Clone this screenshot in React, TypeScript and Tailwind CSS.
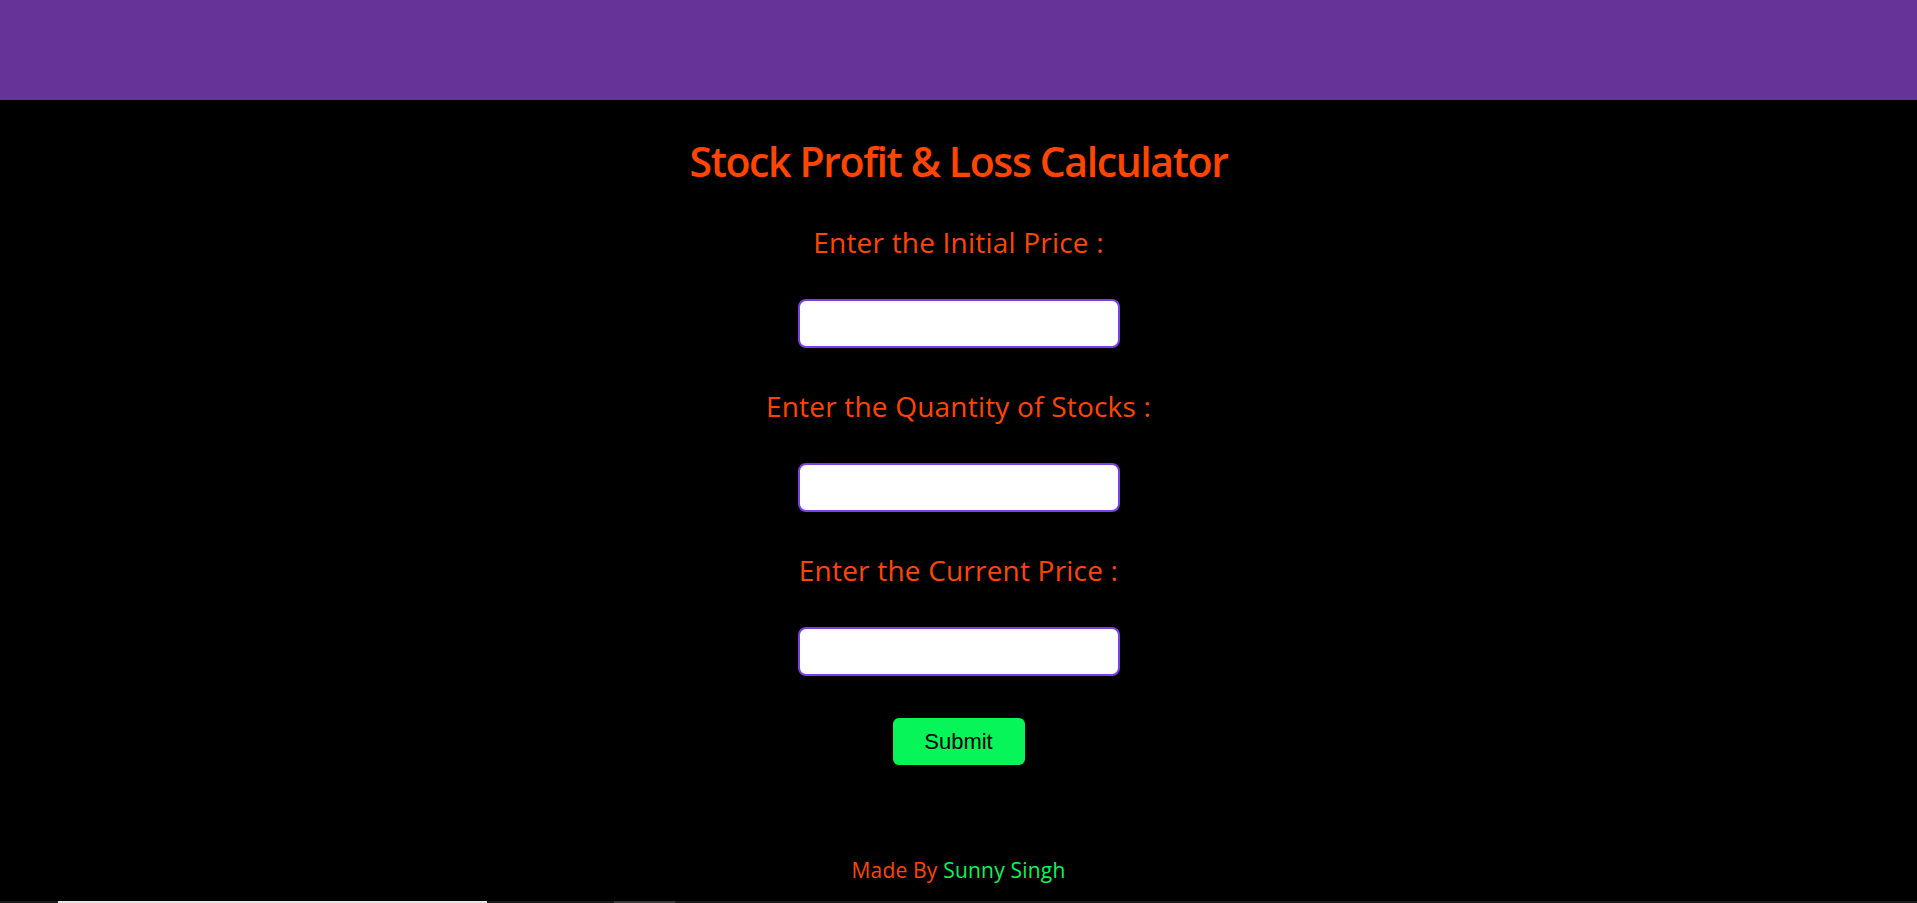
import React from "react";

const font = { fontFamily: '"Open Sans", "Noto Sans", sans-serif' } as const;

function Field({ label }: { label: string }) {
  return (
    <>
      <label className="block text-[28px] leading-[32px] tracking-[0.2px] text-[#ff4500] mt-[42px]">{label}</label>
      <input
        type="number"
        className="mt-[41px] w-[322px] h-[49px] bg-white border-2 border-[#7b3fe4] rounded-lg outline-none px-2"
      />
    </>
  );
}

export default function App() {
  return (
    <div className="min-h-[903px] bg-black flex flex-col" style={font}>
      <header className="h-[100px] w-full bg-[#663399]" />
      <main className="flex-1 flex flex-col items-center">
        <h1 className="mt-[39px] text-[41px] leading-[45px] font-semibold tracking-[-1.4px] text-[#ff4500]">
          Stock Profit &amp; Loss Calculator
        </h1>
        <Field label="Enter the Initial Price :" />
        <Field label="Enter the Quantity of Stocks :" />
        <Field label="Enter the Current Price :" />
        <button
          className="mt-[42px] w-[132px] h-[47px] rounded-md bg-[#08f55a] text-black text-[22px]"
          style={{ fontFamily: '"Liberation Sans", Arial, sans-serif' }}
        >
          Submit
        </button>
        <footer className="mt-[93px] text-[21px] leading-[24px] tracking-[0.2px]">
          <span className="text-[#ff4500]">Made By </span>
          <span className="text-[#08f55a]">Sunny Singh</span>
        </footer>
      </main>
      <div className="h-[2px] w-full bg-[#1a1a1a] flex">
        <div className="ml-[58px] w-[429px] h-full bg-[#e5e5e5]" />
        <div className="ml-[127px] w-[61px] h-full bg-[#3a3a3a]" />
      </div>
    </div>
  );
}
